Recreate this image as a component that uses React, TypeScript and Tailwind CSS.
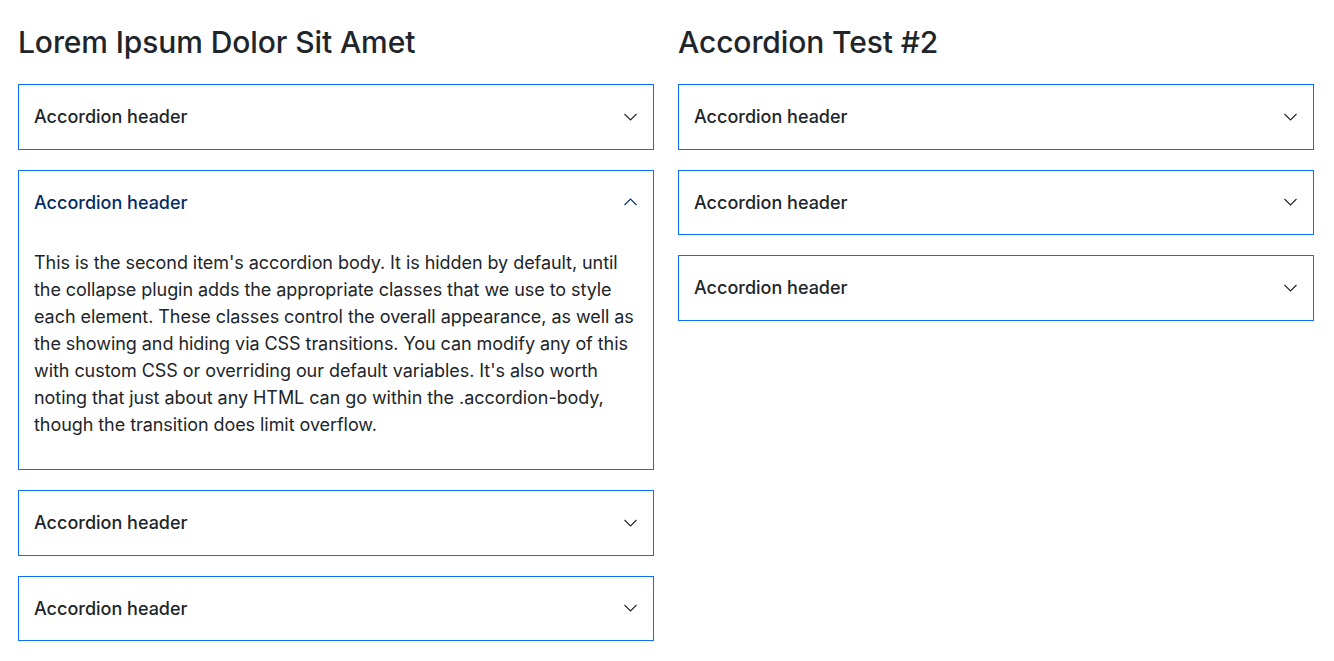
import React from "react";

const Chevron = ({ up }: { up?: boolean }) => (
  <svg width="13" height="8" viewBox="0 0 13 8" className="shrink-0" fill="none">
    {up ? (
      <path d="M0.5 7 L6.5 1 L12.5 7" stroke="#052c65" strokeWidth="1.1" />
    ) : (
      <path d="M0.5 1 L6.5 7 L12.5 1" stroke="#212529" strokeWidth="1.1" />
    )}
  </svg>
);

const Item = ({ open }: { open?: boolean }) => (
  <div className="border border-[#0d6efd] bg-white">
    <div className="h-[63.5px] flex items-center justify-between pl-[15px] pr-[16px] pb-[0.5px]">
      <span
        className={
          "text-[18px] font-medium " + (open ? "text-[#052c65]" : "text-[#212529]")
        }
      >
        Accordion header
      </span>
      <Chevron up={open} />
    </div>
    {open && (
      <div className="px-[15px] pt-[14.5px] pb-[31.5px] text-[18px] leading-[27px] tracking-[-0.06px] text-[#212529]">
        This is the second item's accordion body. It is hidden by default, until the collapse
        plugin adds the appropriate classes that we use to style each element. These classes
        control the overall appearance, as well as the showing and hiding via CSS transitions.
        You can modify any of this with custom CSS or overriding our default variables. It's
        also worth noting that just about any HTML can go within the .accordion-body, though the
        transition does limit overflow.
      </div>
    )}
  </div>
);

export default function App() {
  return (
    <div
      className="min-h-[661px] bg-white pl-[18px] pr-[20px] pt-[22px] flex gap-6"
      style={{ fontFamily: "Inter, 'Noto Sans', sans-serif" }}
    >
      <div className="flex-1 min-w-0">
        <h2 className="text-[30px] font-medium leading-[40px] text-[#212529] mb-[22px] tracking-[-0.1px]">
          Lorem Ipsum Dolor Sit Amet
        </h2>
        <div className="flex flex-col gap-[20px]">
          <Item />
          <Item open />
          <Item />
          <Item />
        </div>
      </div>
      <div className="flex-1 min-w-0">
        <h2 className="text-[30px] font-medium leading-[40px] text-[#212529] mb-[22px] tracking-[-0.1px]">
          Accordion Test #2
        </h2>
        <div className="flex flex-col gap-[20px]">
          <Item />
          <Item />
          <Item />
        </div>
      </div>
    </div>
  );
}
